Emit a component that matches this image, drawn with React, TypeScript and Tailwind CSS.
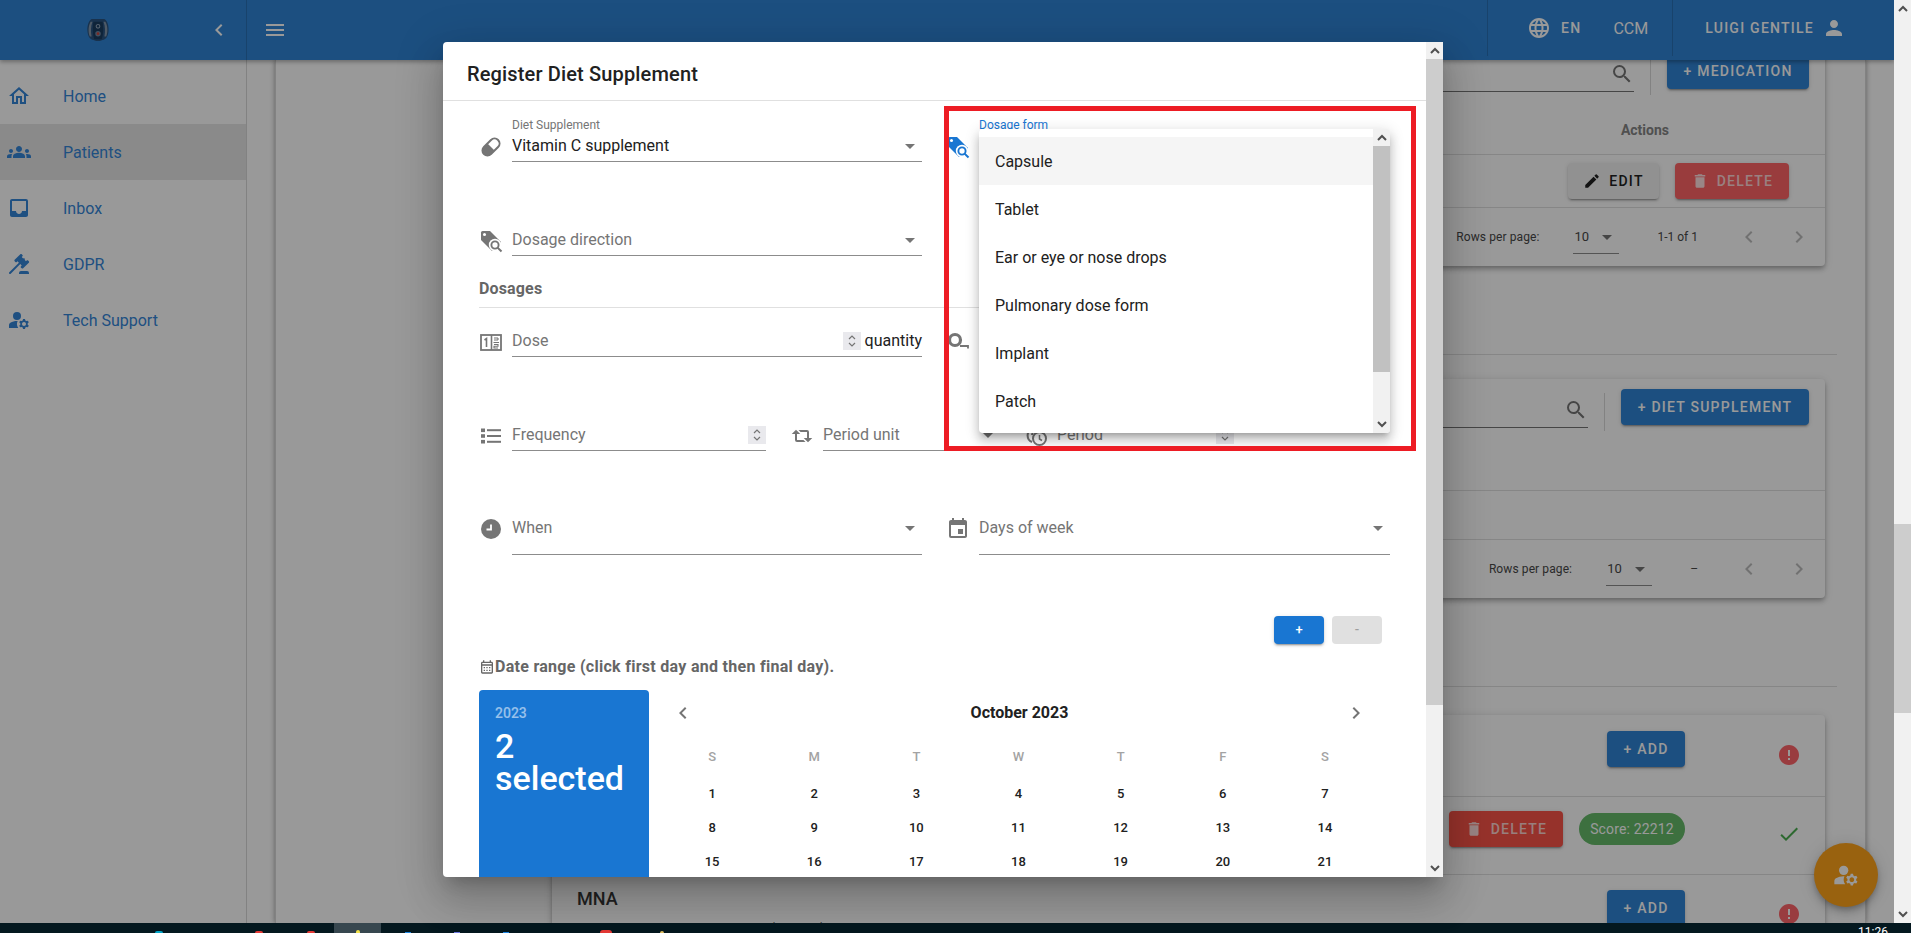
import React from 'react';
import {
  MdOutlineHome,
  MdGroups,
  MdInbox,
  MdManageAccounts,
  MdMenu,
  MdChevronLeft,
  MdChevronRight,
  MdLanguage,
  MdPerson,
  MdSearch,
  MdEdit,
  MdDelete,
  MdError,
  MdCheck,
  MdEvent,
  MdOutlineCalendarMonth,
  MdArrowDropDown,
} from 'react-icons/md';

function GavelIcon({ size, className }: { size?: number; className?: string }) {
  return (
    <svg width={size} height={size} viewBox="0 0 24 24" fill="currentColor" className={className}>
      <path d="M2.3,20.28L11.9,10.68L10.5,9.26L9.78,9.97C9.39,10.36 8.76,10.36 8.37,9.97L7.66,9.26C7.27,8.87 7.27,8.24 7.66,7.85L13.32,2.19C13.71,1.8 14.34,1.8 14.73,2.19L15.44,2.9C15.83,3.29 15.83,3.92 15.44,4.31L14.73,5L16.15,6.43C16.54,6.04 17.17,6.04 17.56,6.43C17.95,6.82 17.95,7.46 17.56,7.85L18.97,9.26L19.68,8.55C20.07,8.16 20.71,8.16 21.1,8.55L21.8,9.26C22.2,9.65 22.2,10.29 21.8,10.68L16.15,16.33C15.76,16.72 15.12,16.72 14.73,16.33L14.03,15.63C13.63,15.24 13.63,14.6 14.03,14.21L14.73,13.5L13.32,12.09L3.71,21.7C3.32,22.09 2.69,22.09 2.3,21.7C1.91,21.31 1.91,20.67 2.3,20.28M20,19A2,2 0 0,1 22,21V22H12V21A2,2 0 0,1 14,19H20Z" />
    </svg>
  );
}

const navItems = [
  { label: 'Home', icon: MdOutlineHome },
  { label: 'Patients', icon: MdGroups, active: true },
  { label: 'Inbox', icon: MdInbox },
  { label: 'GDPR', icon: GavelIcon },
  { label: 'Tech Support', icon: MdManageAccounts },
];

const formOptions = ['Capsule', 'Tablet', 'Ear or eye or nose drops', 'Pulmonary dose form', 'Implant', 'Patch'];
const weekDays = ['S', 'M', 'T', 'W', 'T', 'F', 'S'];
const days = [1, 2, 3, 4, 5, 6, 7, 8, 9, 10, 11, 12, 13, 14, 15, 16, 17, 18, 19, 20, 21];

function Logo() {
  return (
    <svg width="22" height="24" viewBox="0 0 24 26">
      <path d="M5 1 H19 C22 3 24 8 23.5 14 C23 20 21 23 17 24 L14 25 H10 L7 24 C3 23 1 20 0.5 14 C0 8 2 3 5 1Z" fill="#2a5480" />
      <path d="M4 4 C1.5 8 1 15 3 20 L5 20 C4 15 4 9 6 4Z M20 4 C22.5 8 23 15 21 20 L19 20 C20 15 20 9 18 4Z" fill="#8497ab" />
      <path d="M7 4 H17 C18 10 18 18 16 23 H8 C6 18 6 10 7 4Z" fill="#1a3c60" />
      <circle cx="12" cy="9" r="2" fill="none" stroke="#8fa3b8" strokeWidth="1.2" />
      <circle cx="12" cy="17" r="3" fill="#6f87a0" />
      <circle cx="12" cy="17" r="1.5" fill="#c8453f" />
    </svg>
  );
}

function PillIcon() {
  return (
    <svg width="24" height="24" viewBox="0 0 24 24">
      <g transform="rotate(-45 12 12)">
        <rect x="2" y="7" width="20" height="10" rx="5" fill="none" stroke="currentColor" strokeWidth="2" />
        <path d="M12 7 H7 a5 5 0 0 0 0 10 H12Z" fill="currentColor" />
      </g>
    </svg>
  );
}

function TagSearchIcon() {
  return (
    <svg width="24" height="24" viewBox="0 0 24 24">
      <path d="M2 3.5 A1.5 1.5 0 0 1 3.5 2 H11 L22 13 L13 22 L2 11Z" fill="currentColor" />
      <circle cx="5.5" cy="5.5" r="1.5" fill="#fff" />
      <circle cx="16" cy="16" r="6.2" fill="#fff" />
      <circle cx="16" cy="16" r="3.6" fill="none" stroke="currentColor" strokeWidth="1.9" />
      <path d="M18.6 18.6 L22.5 22.5" stroke="currentColor" strokeWidth="2" />
    </svg>
  );
}

function TapeIcon() {
  return (
    <svg width="24" height="24" viewBox="0 0 24 24">
      <circle cx="9" cy="10" r="5.5" fill="none" stroke="currentColor" strokeWidth="3.2" />
      <path d="M14 16 H22 V18.5" fill="none" stroke="currentColor" strokeWidth="1.8" />
    </svg>
  );
}

function DoseIcon() {
  return (
    <svg width="24" height="24" viewBox="0 0 24 24" fill="none" stroke="currentColor">
      <rect x="2" y="5" width="20" height="15" strokeWidth="1.8" />
      <path d="M12.5 5 V20" strokeWidth="1.6" />
      <path d="M5.5 10 L7.5 8.5 V17" strokeWidth="1.6" />
      <path d="M15 8 H19 M19 8 V10 M15 10 H19 M14.5 12.5 H20 M15 14.5 H19 V16.2 H15 V18 H19" strokeWidth="1.1" />
    </svg>
  );
}

function ListIcon() {
  return (
    <svg width="24" height="24" viewBox="0 0 24 24" fill="currentColor">
      <rect x="2" y="4.5" width="4" height="3.6" />
      <rect x="2" y="10.2" width="4" height="3.6" />
      <rect x="2" y="15.9" width="4" height="3.6" />
      <rect x="8" y="5.2" width="14" height="2" />
      <rect x="8" y="11" width="14" height="2" />
      <rect x="8" y="16.8" width="14" height="2" />
    </svg>
  );
}

function RetweetIcon() {
  return (
    <svg width="24" height="24" viewBox="0 0 24 24" fill="currentColor">
      <path d="M6,5.75L10.25,10H7V16H13.5L15.5,18H7A2,2 0 0,1 5,16V10H1.75L6,5.75M18,18.25L13.75,14H17V8H10.5L8.5,6H17A2,2 0 0,1 19,8V14H22.25L18,18.25Z" />
    </svg>
  );
}

function PeriodIcon() {
  return (
    <svg width="24" height="24" viewBox="0 0 24 24" fill="none" stroke="currentColor" strokeWidth="2">
      <path d="M8 5 A7 7 0 0 0 8 18" />
      <path d="M13 5 A7 7 0 0 0 8 11" />
      <circle cx="15.5" cy="14.5" r="6.5" />
      <path d="M15.5 11 V15 L18 16.5" strokeWidth="1.5" />
    </svg>
  );
}

function ClockNineIcon() {
  return (
    <svg width="24" height="24" viewBox="0 0 24 24">
      <circle cx="12" cy="12" r="10" fill="currentColor" />
      <path d="M12 7.5 V12.5 H7.5" fill="none" stroke="#fff" strokeWidth="1.8" />
    </svg>
  );
}

function ScrollArrow({ up }: { up?: boolean }) {
  return (
    <div className="h-[17px] w-[17px] shrink-0 flex items-center justify-center bg-[#f1f1f1] text-[#505050]">
      <svg width="10" height="7" viewBox="0 0 10 7" fill="none" stroke="currentColor" strokeWidth="2">
        <path d={up ? 'M1 6 L5 2 L9 6' : 'M1 1 L5 5 L9 1'} />
      </svg>
    </div>
  );
}

function Spinner() {
  return (
    <div className="w-[18px] h-[18px] bg-[#e9e9ed] flex items-center justify-center shrink-0 text-[#757575]">
      <svg width="10" height="16" viewBox="0 0 10 16" fill="none" stroke="currentColor" strokeWidth="1.2">
        <path d="M2 6 L5 3 L8 6 M2 10 L5 13 L8 10" />
      </svg>
    </div>
  );
}

function Field({
  icon,
  label,
  value,
  placeholder,
  arrow,
  spinner,
  suffix,
  tall,
  focused,
  width,
}: {
  icon: React.ReactNode;
  label?: string;
  value?: string;
  placeholder?: string;
  arrow?: boolean;
  spinner?: boolean;
  suffix?: string;
  tall?: boolean;
  focused?: boolean;
  width?: string;
}) {
  return (
    <div className={`flex items-end ${width ?? ''}`}>
      <div className={`w-[33px] shrink-0 h-[31px] flex items-center ${tall ? 'mb-[11px]' : ''} ${focused ? 'text-[#1976d2]' : 'text-[#757575]'}`}>
        {icon}
      </div>
      <div className="flex-1 min-w-0 flex flex-col">
        {label && (
          <span className={`text-[12px] leading-[12px] -mb-px ${focused ? 'text-[#1976d2]' : 'text-[#757575]'}`}>{label}</span>
        )}
        <div className={`flex items-center border-b border-[#8c8c8c] box-content ${tall ? 'h-[52px]' : 'h-[31px]'}`}>
          <span className={`flex-1 text-[16px] whitespace-nowrap ${value ? 'text-[#212121]' : 'text-[#757575]'}`}>
            {value ?? placeholder}
          </span>
          {spinner && <Spinner />}
          {suffix && <span className="text-[16px] text-[#212121] ml-[4px]">{suffix}</span>}
          {arrow && <MdArrowDropDown size={24} className="text-[#757575] shrink-0" />}
        </div>
      </div>
    </div>
  );
}

function BlueButton({ children, width }: { children: React.ReactNode; width: string }) {
  return (
    <button className={`${width} h-[36px] shrink-0 rounded bg-[#3084d5] text-white text-[14px] font-medium tracking-[1.25px] flex items-center justify-center shadow-[0_3px_1px_-2px_rgba(0,0,0,.2),0_2px_2px_0_rgba(0,0,0,.14),0_1px_5px_0_rgba(0,0,0,.12)]`}>
      {children}
    </button>
  );
}

function DeleteButton({ color }: { color: string }) {
  return (
    <button className={`w-[114px] h-[36px] shrink-0 rounded ${color} text-white/75 text-[14px] font-medium tracking-[1.25px] flex items-center justify-center gap-[8px] shadow-[0_3px_1px_-2px_rgba(0,0,0,.2),0_2px_2px_0_rgba(0,0,0,.14),0_1px_5px_0_rgba(0,0,0,.12)]`}>
      <MdDelete size={18} className="text-white/80" />
      DELETE
    </button>
  );
}

function SearchBox() {
  return (
    <div className="w-[300px] h-[39px] pt-[3px] flex items-center justify-end border-b border-[#757575] text-[#757575]">
      <MdSearch size={24} />
    </div>
  );
}

function Pagination({ range }: { range: string }) {
  return (
    <div className="h-[58px] flex items-center justify-end pr-[14px] text-[12px] text-[#484848]">
      <span className="tracking-[0.1px]">Rows per page:</span>
      <div className="ml-[34px] w-[46px] h-[34px] border-b border-[#8c8c8c] flex items-center justify-between box-border text-[13px]">
        <span className="pl-[1px]">10</span>
        <MdArrowDropDown size={24} className="text-[#757575]" />
      </div>
      <span className="ml-[38px]">{range}</span>
      <MdChevronLeft size={24} className="ml-[39px] text-[#bdbdbd]" />
      <MdChevronRight size={24} className="ml-[26px] text-[#bdbdbd]" />
    </div>
  );
}

function TableCard({ button, buttonWidth, range, topPad, children, rowHeight, actions }: { button: string; buttonWidth: string; range: string; topPad: string; children?: React.ReactNode; rowHeight: string; actions?: boolean }) {
  return (
    <div className={`w-[1273px] mr-[40px] shrink-0 rounded bg-white shadow-[0_2px_4px_-1px_rgba(0,0,0,.2),0_4px_5px_0_rgba(0,0,0,.14),0_1px_10px_0_rgba(0,0,0,.12)] ${topPad}`}>
      <div className="h-[36px] flex justify-end items-start pr-[16px]">
        <SearchBox />
        <div className="w-px h-[38px] mt-[4px] mx-[16px] bg-black/15" />
        <BlueButton width={buttonWidth}>{button}</BlueButton>
      </div>
      <div className="h-[66px] flex items-end justify-end pr-[156px] pb-[14px] border-b border-[#e0e0e0] text-[14px] leading-[20px] font-bold text-[#858585]">
        {actions && 'Actions'}
      </div>
      <div className={`${rowHeight} flex justify-end items-start gap-[16px] pt-[8px] pr-[36px] border-b border-[#e0e0e0]`}>{children}</div>
      <Pagination range={range} />
    </div>
  );
}

function ContentPage() {
  return (
    <div className="w-[1591px] ml-[28px] h-full flex flex-col items-end bg-white border-x border-black/15 shadow-[0_0_5px_rgba(0,0,0,.4)] overflow-hidden relative">
      <div className="-mt-[40px]" />
      <TableCard button="+ MEDICATION" buttonWidth="w-[142px]" range="1-1 of 1" topPad="pt-[33px]" rowHeight="h-[53px]" actions>
        <button className="w-[91px] h-[36px] rounded bg-[#f2f2f2] text-[#212121] text-[14px] font-medium tracking-[1.25px] flex items-center justify-center gap-[8px] shadow-[0_3px_1px_-2px_rgba(0,0,0,.2),0_2px_2px_0_rgba(0,0,0,.14),0_1px_5px_0_rgba(0,0,0,.12)]">
          <MdEdit size={18} />
          EDIT
        </button>
        <DeleteButton color="bg-[#ff6466]" />
      </TableCard>
      <div className="w-[1297px] h-px mr-[28px] mt-[88px] bg-[#e0e0e0] shrink-0" />
      <div className="mt-[24px]" />
      <TableCard button="+ DIET SUPPLEMENT" buttonWidth="w-[188px]" range="–" topPad="pt-[10px]" rowHeight="h-[49px]" />
      <div className="w-[1297px] h-px mr-[28px] mt-[88px] bg-[#e0e0e0] shrink-0" />
      <div className="w-[1273px] mr-[40px] mt-[28px] rounded-t bg-white shadow-[0_2px_4px_-1px_rgba(0,0,0,.2),0_4px_5px_0_rgba(0,0,0,.14),0_1px_10px_0_rgba(0,0,0,.12)] flex-1 flex flex-col">
        <div className="h-[82px] flex justify-end items-start gap-[92px] pr-[24px] pt-[16px] border-b border-[#e0e0e0] shrink-0">
          <BlueButton width="w-[78px]">+ ADD</BlueButton>
          <MdError size={24} className="mt-[12px] text-[#ff6469]" />
        </div>
        <div className="h-[78px] flex justify-end items-start pr-[24px] pt-[14px] border-b border-[#e0e0e0] shrink-0">
          <DeleteButton color="bg-[#fa5449]" />
          <span className="ml-[16px] mt-[2px] w-[106px] h-[32px] rounded-full bg-[#66bb6a] text-white text-[14px] tracking-[0.15px] flex items-center justify-center">Score: 22212</span>
          <MdCheck size={24} className="ml-[92px] mt-[11px] text-[#4caf50]" />
        </div>
        <div className="flex items-start pr-[24px] pl-[25px] pt-[15px]">
          <div className="-mt-[3px] flex-1">
            <div className="text-[18px] leading-[24px] font-medium text-[#383838]">MNA</div>
            <div className="mt-[7px] text-[15px] text-[#424242]">Mini Nutritional Assessment (MNA®)</div>
          </div>
          <BlueButton width="w-[78px]">+ ADD</BlueButton>
          <MdError size={24} className="ml-[92px] mt-[12px] text-[#ff6469]" />
        </div>
      </div>
    </div>
  );
}

function Calendar() {
  return (
    <div className="flex mt-[12px]">
      <div className="w-[170px] h-[300px] rounded-t bg-[#1976d2] text-white pl-[16px] pt-[13px] shrink-0">
        <div className="text-[14px] leading-[20px] font-medium text-white/55">2023</div>
        <div className="mt-[7px] text-[34px] leading-[32px] font-medium w-[140px]">2 selected</div>
      </div>
      <div className="w-[727px] pl-[12px]">
        <div className="h-[46px] -mr-[2px] flex items-center justify-between text-[#757575]">
          <div className="w-[44px] flex justify-center"><MdChevronLeft size={24} /></div>
          <span className="text-[16px] font-bold text-[#212121]">October 2023</span>
          <div className="w-[44px] flex justify-center"><MdChevronRight size={24} /></div>
        </div>
        <div className="grid grid-cols-7 mt-[11px] h-[20px] text-[13px] font-medium text-[#a3a3a3]">
          {weekDays.map((d, i) => (
            <div key={i} className="text-center leading-[20px]">{d}</div>
          ))}
        </div>
        <div className="grid grid-cols-7 mt-[10px] text-[13px] font-medium text-[#212121]">
          {days.map((d) => (
            <div key={d} className="h-[34px] flex items-center justify-center">{d}</div>
          ))}
        </div>
      </div>
    </div>
  );
}

function RegisterDialog() {
  return (
    <div className="absolute left-[443px] top-[42px] w-[1000px] h-[835px] flex rounded-l bg-white shadow-[0_11px_15px_-7px_rgba(0,0,0,.2),0_24px_38px_3px_rgba(0,0,0,.14),0_9px_46px_8px_rgba(0,0,0,.12)] overflow-hidden">
      <div className="w-[983px] flex flex-col overflow-hidden">
        <div className="h-[59px] shrink-0 border-b border-[#e0e0e0] pl-[24px] flex items-center pt-[5px] text-[20px] tracking-[0.15px] font-medium text-[#212121]">
          Register Diet Supplement
        </div>
        <div className="w-[911px] ml-[36px] shrink-0">
          <div className="h-[61px] flex items-end gap-[24px]">
            <Field width="w-[443px]" icon={<PillIcon />} label="Diet Supplement" value="Vitamin C supplement" arrow />
            <Field width="w-[444px]" icon={<TagSearchIcon />} label="Dosage form" placeholder="" arrow focused />
          </div>
          <div className="h-[94px] flex items-end">
            <Field width="w-[443px]" icon={<TagSearchIcon />} placeholder="Dosage direction" arrow />
          </div>
          <div className="h-[52px] pt-[22px] border-b border-[#e0e0e0] text-[16px] leading-[22px] tracking-[0.15px] font-bold text-[#666666] box-border">
            Dosages
          </div>
          <div className="h-[49px] flex items-end gap-[24px]">
            <Field width="w-[443px]" icon={<DoseIcon />} placeholder="Dose" spinner suffix="quantity" />
            <Field width="w-[444px]" icon={<TapeIcon />} placeholder="" />
          </div>
          <div className="h-[94px] flex items-end gap-[24px]">
            <Field width="w-[287px]" icon={<ListIcon />} placeholder="Frequency" spinner />
            <Field width="w-[210px]" icon={<RetweetIcon />} placeholder="Period unit" arrow />
            <Field width="w-[210px]" icon={<PeriodIcon />} placeholder="Period" spinner />
          </div>
          <div className="h-[104px] flex items-end gap-[24px]">
            <Field width="w-[443px]" icon={<ClockNineIcon />} placeholder="When" arrow tall />
            <Field width="w-[444px]" icon={<MdEvent size={24} />} placeholder="Days of week" arrow tall />
          </div>
          <div className="mt-[61px] flex justify-end gap-[8px] pr-[8px]">
            <button className="w-[50px] h-[28px] rounded bg-[#1976d2] text-white text-[13px] font-medium shadow-[0_3px_1px_-2px_rgba(0,0,0,.2),0_2px_2px_0_rgba(0,0,0,.14),0_1px_5px_0_rgba(0,0,0,.12)]">+</button>
            <button className="w-[50px] h-[28px] rounded bg-[#e0e0e0] text-[#9e9e9e] text-[13px] font-medium">-</button>
          </div>
          <div className="mt-[12px] h-[22px] flex items-center text-[16px] tracking-[0.28px] font-bold text-[#666666]">
            <MdOutlineCalendarMonth size={16} className="shrink-0" />
            Date range (click first day and then final day).
          </div>
          <Calendar />
        </div>
      </div>
      <div className="w-[17px] flex flex-col bg-[#f1f1f1]">
        <ScrollArrow up />
        <div className="h-[646px] bg-[#cdcdcd]" />
        <div className="flex-1" />
        <ScrollArrow />
      </div>
    </div>
  );
}

function DosageFormMenu() {
  return (
    <div className="absolute left-[979px] top-[129px] w-[411px] h-[304px] flex rounded bg-white overflow-hidden shadow-[0_5px_5px_-3px_rgba(0,0,0,.2),0_8px_10px_1px_rgba(0,0,0,.14),0_3px_14px_2px_rgba(0,0,0,.12)]">
      <ul className="flex-1 pt-[8px]">
        {formOptions.map((opt, i) => (
          <li key={opt} className={`h-[48px] pl-[16px] pt-[1px] flex items-center text-[16px] text-[#212121] ${i === 0 ? 'bg-[#f5f5f5]' : ''}`}>
            {opt}
          </li>
        ))}
      </ul>
      <div className="w-[17px] flex flex-col bg-[#f1f1f1]">
        <ScrollArrow up />
        <div className="h-[226px] bg-[#c1c1c1]" />
        <div className="flex-1" />
        <ScrollArrow />
      </div>
    </div>
  );
}

export default function App() {
  return (
    <div className="w-[1911px] h-[933px] flex flex-col overflow-hidden font-[Roboto,sans-serif]">
      <div className="h-[923px] flex">
        <div className="w-[1894px] h-full relative flex flex-col overflow-hidden">
          <header className="h-[60px] shrink-0 bg-[#3084d5] text-white flex items-center relative z-10 shadow-[0_2px_4px_rgba(0,0,0,.3)]">
            <div className="w-[247px] h-full flex items-center pl-[87px] border-r border-black/15">
              <Logo />
              <MdChevronLeft size={24} className="ml-auto mr-[15px]" />
            </div>
            <MdMenu size={24} className="ml-[16px]" />
            <div className="ml-auto h-[56px] self-start flex items-center pl-[39px] pr-[24px] border-x border-black/15">
              <MdLanguage size={24} />
              <span className="ml-[10px] pt-px text-[14px] font-medium tracking-[1.25px]">EN</span>
              <span className="ml-[32px] pt-px text-[16px]">CCM</span>
            </div>
            <div className="h-[56px] self-start flex items-center pl-[32px] pr-[48px]">
              <span className="text-[14px] font-medium tracking-[1.25px]">LUIGI GENTILE</span>
              <MdPerson size={24} className="ml-[8px]" />
            </div>
          </header>
          <div className="flex-1 flex min-h-0">
            <aside className="w-[247px] shrink-0 bg-white border-r border-black/15 pt-[8px] text-[#3485d8]">
              {navItems.map((item) => (
                <div key={item.label} className={`h-[56px] flex items-center pl-[7px] gap-[32px] text-[16px] ${item.active ? 'bg-[#e6e6e6]' : ''}`}>
                  <item.icon size={24} className="shrink-0" />
                  <span className="pt-px">{item.label}</span>
                </div>
              ))}
            </aside>
            <ContentPage />
          </div>
          <div className="absolute left-[1814px] top-[843px] w-[64px] h-[64px] rounded-full bg-[#ffa31a] text-white flex items-center justify-center shadow-[0_3px_5px_-1px_rgba(0,0,0,.2),0_6px_10px_0_rgba(0,0,0,.14),0_1px_18px_0_rgba(0,0,0,.12)]">
            <MdManageAccounts size={28} />
          </div>
          <div className="absolute inset-0 z-20 bg-black/40" />
        </div>
        <div className="w-[17px] flex flex-col bg-[#f1f1f1]">
          <ScrollArrow up />
          <div className="h-[507px]" />
          <div className="h-[189px] bg-[#cdcdcd]" />
          <div className="flex-1" />
          <ScrollArrow />
        </div>
      </div>
      <div className="h-[10px] bg-[#04181f] flex items-end overflow-hidden">
        <span className="ml-[155px] w-[8px] h-[2px] rounded-t bg-[#00a5c8]" />
        <span className="ml-[92px] w-[8px] h-[2px] rounded-t bg-[#e53935]" />
        <span className="ml-[44px] w-[8px] h-[2px] rounded-t bg-[#e53935]" />
        <div className="ml-[19px] w-[47px] h-[10px] bg-[#37474f] flex items-end justify-center">
          <span className="w-[4px] h-[3px] rounded-t bg-[#f2e24a]" />
        </div>
        <span className="ml-[24px] w-[6px] h-[1px] bg-[#1e88e5]" />
        <span className="ml-[43px] w-[6px] h-[1px] bg-[#6f78e0]" />
        <span className="ml-[43px] w-[6px] h-[1px] bg-[#1e88e5]" />
        <span className="ml-[91px] w-[12px] h-[3px] rounded-t bg-[#e53935]" />
        <span className="ml-[48px] w-[4px] h-[2px] rounded-t bg-[#e0c060]" />
        <span className="ml-auto mr-[23px] self-start pt-[1px] text-[12px] leading-[16px] text-white">11:26</span>
      </div>
      <div className="absolute left-0 top-0 z-30 w-[1911px] h-[923px] pointer-events-none">
        <RegisterDialog />
        <DosageFormMenu />
        <div className="absolute left-[944px] top-[106px] w-[472px] h-[345px] border-[5px] border-[#ed1c24]" />
      </div>
    </div>
  );
}
